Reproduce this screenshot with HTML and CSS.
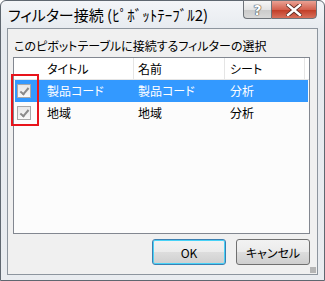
FILE: index.html
```html
<!DOCTYPE html>
<html lang="ja">
<head>
    <meta charset="UTF-8">
    <title>フィルター接続</title>
    <link rel="stylesheet" href="styles.css">
</head>
<body>
    <div class="window">
        <div class="titlebar">
            <span class="title">フィルター接続 (ﾋﾟﾎﾞｯﾄﾃｰﾌﾞﾙ2)</span>
            <div class="caption-buttons">
                <div class="cap help">?</div>
                <div class="cap close">
                    <svg width="16" height="12" viewBox="0 0 16 12">
                        <path d="M2 1 L14 11 M14 1 L2 11" stroke="#5a2a22" stroke-width="4.2" stroke-linecap="square"/>
                        <path d="M2 1 L14 11 M14 1 L2 11" stroke="#ffffff" stroke-width="2.4" stroke-linecap="square"/>
                    </svg>
                </div>
            </div>
        </div>
        <div class="client">
            <div class="prompt">このピボットテーブルに接続するフィルターの選択</div>
            <div class="listbox">
                <div class="lv-header">
                    <div class="col c0">タイトル</div>
                    <div class="col c1">名前</div>
                    <div class="col c2">シート</div>
                </div>
                <div class="lv-row selected">
                    <div class="col c0"><span class="check"></span>製品コード</div>
                    <div class="col c1">製品コード</div>
                    <div class="col c2">分析</div>
                </div>
                <div class="lv-row">
                    <div class="col c0"><span class="check"></span>地域</div>
                    <div class="col c1">地域</div>
                    <div class="col c2">分析</div>
                </div>
                <div class="highlight"></div>
            </div>
            <div class="buttons">
                <button class="btn default">OK</button>
                <button class="btn">キャンセル</button>
            </div>
            <div class="grip"></div>
        </div>
    </div>
</body>
</html>
```

FILE: styles.css
```css
body {
    margin: 0;
    font-family: "Noto Sans CJK JP", "Noto Sans", sans-serif;
    font-feature-settings: "palt";
    background: #ffffff;
}
.window {
    box-sizing: border-box;
    width: 325px;
    height: 281px;
    padding: 0 6px 5px 6px;
    border: 1px solid #5f6770;
    border-radius: 6px 6px 0 0;
    background: linear-gradient(#f3f5f8, #e6eaef 30px, #e9ecf0);
    display: flex;
    flex-direction: column;
}
.titlebar {
    height: 27px;
    display: flex;
    justify-content: space-between;
    align-items: flex-start;
}
.title {
    margin-top: 4px;
    padding-left: 1px;
    font-size: 15px;
    line-height: 20px;
    color: #000;
}
.caption-buttons {
    display: flex;
    margin-top: -1px;
    margin-right: 1px;
}
.cap {
    box-sizing: border-box;
    height: 19px;
    border: 1px solid #6e7379;
    display: flex;
    justify-content: center;
    align-items: center;
}
.help {
    width: 28px;
    border-right: none;
    border-radius: 0 0 0 4px;
    background: linear-gradient(#f7f7f7, #e4e4e4 50%, #cacaca 51%, #d8d8d8);
    font-family: "DejaVu Sans", sans-serif;
    font-size: 14px;
    font-weight: bold;
    color: #fff;
    text-shadow: 0 0 1px #444, 0 0 1px #444, 0 0 1px #444;
}
.close {
    width: 46px;
    border-radius: 0 0 4px 0;
    background: linear-gradient(#eaa294, #d4624f 50%, #c13a24 51%, #d8705c);
}
.client {
    position: relative;
    box-sizing: border-box;
    height: 247px;
    border: 1px solid #8d959e;
    background: #f0f0f0;
    display: flex;
    flex-direction: column;
}
.prompt {
    margin: 9px 0 3px 6px;
    font-size: 12px;
    line-height: 16px;
    color: #000;
}
.listbox {
    position: relative;
    box-sizing: border-box;
    width: 297px;
    height: 177px;
    margin-left: 5px;
    border: 1px solid #828790;
    background: #fcfcfc;
    font-size: 12px;
}
.lv-header {
    display: flex;
    height: 21px;
    border-bottom: 1px solid #e5e5e5;
    background: #ffffff;
}
.lv-header .col {
    line-height: 22px;
    border-right: 1px solid #e5e5e5;
}
.lv-header .c2 {
    width: 80px;
}
.col {
    box-sizing: border-box;
    white-space: nowrap;
    overflow: hidden;
}
.c0 {
    width: 120px;
    padding-left: 33px;
}
.c1 {
    width: 91px;
    padding-left: 4px;
}
.c2 {
    width: 81px;
    padding-left: 5px;
}
.lv-row {
    display: flex;
    height: 22px;
    line-height: 22px;
    color: #000;
}
.lv-row .c0 {
    position: relative;
}
.selected {
    margin: 0 1px;
    background: #3399ff;
    color: #fff;
}
.selected .c0 {
    width: 119px;
    padding-left: 32px;
}
.check {
    position: absolute;
    left: 3px;
    top: 4px;
    box-sizing: border-box;
    width: 14px;
    height: 14px;
    border: 1px solid #a8a8a8;
    background: linear-gradient(#e8e8e8, #f8f8f8);
}
.selected .check {
    left: 2px;
}
.check::after {
    content: "";
    position: absolute;
    left: 4px;
    top: 1px;
    width: 3px;
    height: 7px;
    border: solid #8a8a8a;
    border-width: 0 2px 2px 0;
    transform: rotate(40deg);
}
.highlight {
    position: absolute;
    left: -3px;
    top: 16px;
    box-sizing: border-box;
    width: 28px;
    height: 52px;
    border: 2px solid #e8141b;
}
.buttons {
    display: flex;
    justify-content: flex-end;
    gap: 10px;
    margin: 5px 7px 0 0;
}
.btn {
    box-sizing: border-box;
    width: 74px;
    height: 26px;
    padding: 0;
    border: 1px solid #707070;
    border-radius: 3px;
    background: linear-gradient(#f2f2f2, #ebebeb 50%, #dddddd 51%, #cfcfcf);
    font-family: "Noto Sans CJK JP", "Noto Sans", sans-serif;
    font-feature-settings: "palt";
    font-size: 12px;
    color: #000;
}
.btn.default {
    border-color: #3c7fb1;
    box-shadow: inset 0 0 0 1px #48d2f7;
}
.grip {
    position: absolute;
    right: 1px;
    bottom: 1px;
    width: 6px;
    height: 6px;
    background: radial-gradient(circle, #a0a0a0 0.6px, transparent 1px) 0 0 / 2px 2px;
}
```
